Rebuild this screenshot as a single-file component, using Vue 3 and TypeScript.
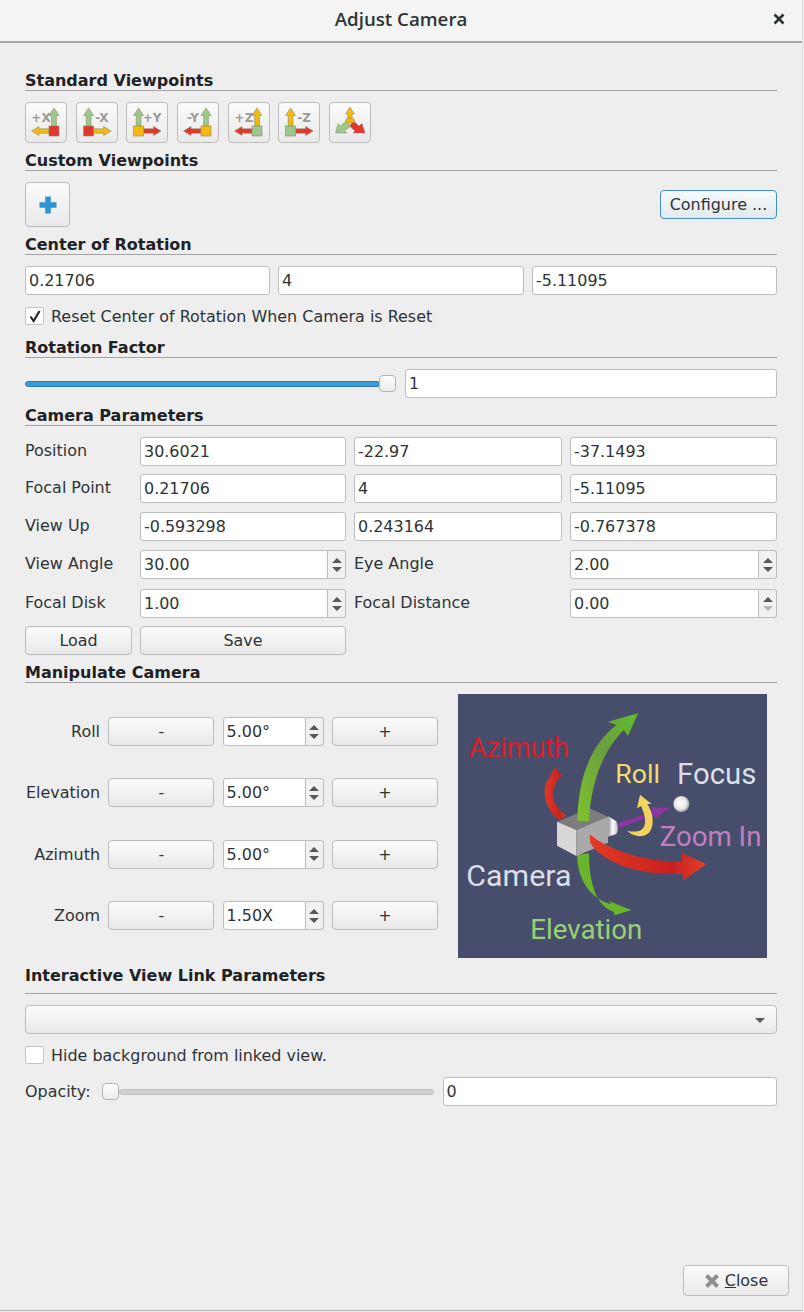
<script setup lang="ts">
const G = '#9cc88c', Y = '#f4b90f', R = '#e2382c'
const views = [
  { t: '+X', flip: false, v: G, h: Y, s: R },
  { t: '-X', flip: true, v: G, h: Y, s: R },
  { t: '+Y', flip: true, v: G, h: R, s: Y },
  { t: '-Y', flip: false, v: G, h: R, s: Y },
  { t: '+Z', flip: false, v: Y, h: R, s: G },
  { t: '-Z', flip: true, v: Y, h: R, s: G },
]
const params = [
  { label: 'Position', vals: ['30.6021', '-22.97', '-37.1493'] },
  { label: 'Focal Point', vals: ['0.21706', '4', '-5.11095'] },
  { label: 'View Up', vals: ['-0.593298', '0.243164', '-0.767378'] },
]
const manip = [
  { label: 'Roll', val: '5.00°' },
  { label: 'Elevation', val: '5.00°' },
  { label: 'Azimuth', val: '5.00°' },
  { label: 'Zoom', val: '1.50X' },
]
</script>

<template>
  <div class="window">
    <header class="title">
      <span class="title-text">Adjust Camera</span>
      <svg class="title-x" width="12" height="12" viewBox="0 0 12 12">
        <path d="M1.5 1.5 10.5 10.5M10.5 1.5 1.5 10.5" stroke="#2e3436" stroke-width="2.6" />
      </svg>
    </header>

    <main class="body">
      <div class="head first">Standard Viewpoints</div>
      <div class="views">
        <button v-for="v in views" :key="v.t" class="btn view">
          <svg width="42" height="41" viewBox="0 0 42 41">
            <g :transform="v.flip ? 'translate(41.6 0) scale(-1 1)' : ''" stroke="#8b8b6f" stroke-width=".6">
              <path d="M29 6 34 13.5H31.4V24H26.6V13.5H24Z" :fill="v.v" />
              <path d="M6.5 29 14 24.5V26.8H24V31.2H14V33.5Z" :fill="v.h" />
              <rect x="24" y="24" width="10" height="10" :fill="v.s" />
            </g>
            <text class="vt" :x="v.flip ? 26 : 16" y="19.5" text-anchor="middle">{{ v.t }}</text>
          </svg>
        </button>
        <button class="btn view">
          <svg width="42" height="41" viewBox="0 0 42 41">
            <g stroke="#8b8b6f" stroke-width=".5">
              <path d="M6.5 31 9 21.5 11.5 24 17 19 21.5 24 15.5 29 18 31Z" fill="#9cc88c" />
              <path d="M36 31 33 21.5 30 24 24.5 19 20.5 24 26 29 24 31Z" fill="#e2382c" />
              <path d="M21 5 25.5 12H23.3V17H18.7V12H16.5Z" fill="#f4b90f" />
              <ellipse cx="21" cy="18.5" rx="4.5" ry="2.6" fill="#f4b90f" />
            </g>
          </svg>
        </button>
      </div>

      <div class="head">Custom Viewpoints</div>
      <div class="custom">
        <button class="btn plus">
          <svg width="20" height="20" viewBox="0 0 20 20">
            <path d="M7.2 1.5H12.8V7.2H18.5V12.8H12.8V18.5H7.2V12.8H1.5V7.2H7.2Z" fill="#2f94cf" />
          </svg>
        </button>
        <button class="btn configure">Configure ...</button>
      </div>

      <div class="head">Center of Rotation</div>
      <div class="three">
        <input class="field" readonly value="0.21706" />
        <input class="field" readonly value="4" />
        <input class="field" readonly value="-5.11095" />
      </div>
      <label class="check">
        <span class="box">
          <svg width="14" height="14" viewBox="0 0 14 14">
            <path d="M2.5 7.5 5.6 12 11.5 2" fill="none" stroke="#26292b" stroke-width="2.2" />
          </svg>
        </span>
        Reset Center of Rotation When Camera is Reset
      </label>

      <div class="head mt12">Rotation Factor</div>
      <div class="rot">
        <div class="slider rot-slider">
          <div class="track blue"></div>
          <div class="handle"></div>
        </div>
        <input class="field" readonly value="1" />
      </div>

      <div class="head">Camera Parameters</div>
      <div class="params">
        <template v-for="p in params" :key="p.label">
          <span class="lab">{{ p.label }}</span>
          <input v-for="x in p.vals" :key="x" class="field" readonly :value="x" />
        </template>

        <span class="lab">View Angle</span>
        <div class="spin">
          <input class="field" readonly value="30.00" />
          <span class="arrows"><i class="up"></i><i class="down"></i></span>
        </div>
        <span class="lab">Eye Angle</span>
        <div class="spin">
          <input class="field" readonly value="2.00" />
          <span class="arrows"><i class="up"></i><i class="down"></i></span>
        </div>

        <span class="lab">Focal Disk</span>
        <div class="spin">
          <input class="field" readonly value="1.00" />
          <span class="arrows"><i class="up"></i><i class="down"></i></span>
        </div>
        <span class="lab">Focal Distance</span>
        <div class="spin">
          <input class="field" readonly value="0.00" />
          <span class="arrows"><i class="up"></i><i class="down off"></i></span>
        </div>

        <button class="btn">Load</button>
        <button class="btn">Save</button>
      </div>

      <div class="head">Manipulate Camera</div>
      <div class="manip">
        <div class="manip-rows">
          <template v-for="m in manip" :key="m.label">
            <span class="mlab">{{ m.label }}</span>
            <button class="btn">-</button>
            <div class="spin small">
              <input class="field" readonly :value="m.val" />
              <span class="arrows"><i class="up"></i><i class="down"></i></span>
            </div>
            <button class="btn">+</button>
          </template>
        </div>

        <svg class="diagram" width="309" height="264" viewBox="0 0 309 264">
          <defs>
            <linearGradient id="gr" x1="0" y1="1" x2="1" y2="0">
              <stop offset="0" stop-color="#7fc22e" />
              <stop offset=".55" stop-color="#6a9f3e" />
              <stop offset="1" stop-color="#62bb2c" />
            </linearGradient>
            <linearGradient id="rd" x1="0" y1="0" x2="1" y2="0">
              <stop offset="0" stop-color="#e23a24" />
              <stop offset=".7" stop-color="#c9201f" />
              <stop offset="1" stop-color="#e2402a" />
            </linearGradient>
            <linearGradient id="lens" x1="0" y1="0" x2="1" y2="0">
              <stop offset="0" stop-color="#9a9a9a" />
              <stop offset=".5" stop-color="#ffffff" />
              <stop offset="1" stop-color="#bdbdbd" />
            </linearGradient>
            <radialGradient id="ball" cx=".45" cy=".45" r=".6">
              <stop offset="0" stop-color="#ffffff" />
              <stop offset=".6" stop-color="#e9e9e9" />
              <stop offset="1" stop-color="#8d8f98" />
            </radialGradient>
          </defs>
          <rect width="309" height="264" fill="#474e6c" />
          <g transform="translate(-18.3 -14) scale(.3333)">
            <path d="M412 525C415 600 450 655 515 673L507 663 575 690 525 706 522 695C470 680 448 610 448 520Z" fill="#6ab52e" />
            <path d="M358 420C322 390 308 350 318 312L325 300 345 263 367 285 352 300 340 330C335 360 350 385 380 407Z" fill="url(#rd)" />
            <path d="M505 408 530 424C536 440 536 452 530 462L505 470Z" fill="url(#lens)" />
            <path d="M352 425 450 385 505 410 410 450Z" fill="#7d7d7d" />
            <path d="M352 425 410 450 410 528 352 497Z" fill="#d8d8d8" />
            <path d="M410 450 505 410 505 488 410 528Z" fill="#a9a9a9" />
            <path d="M413 422C415 310 445 200 530 135L505 125 595 100 565 168 552 150C485 220 455 310 447 424Z" fill="url(#gr)" />
            <path d="M532 430 638 396 634 382 692 383 648 414 643 408 537 443Z" fill="#8a36a0" />
            <path d="M562 452C590 458 612 456 616 430 618 410 610 392 604 378L592 385 601 344 636 372 623 372C642 400 645 440 628 458 610 475 580 470 562 452Z" fill="#f3d35c" />
            <path d="M450 463C500 505 600 545 725 545L727 520 800 552 730 602 728 580C610 590 490 550 452 490Z" fill="url(#rd)" />
            <circle cx="725" cy="372" r="24" fill="url(#ball)" />
            <text class="dt" x="88" y="230" fill="#d8202a" font-size="81">Azimuth</text>
            <text class="dt" x="527" y="310" fill="#f3dc6a" font-size="80">Roll</text>
            <text class="dt" x="712" y="313" fill="#dcdfe6" font-size="88">Focus</text>
            <text class="dt" x="660" y="497" fill="#c07fc0" font-size="83">Zoom In</text>
            <text class="dt" x="80" y="617" fill="#dcdfe6" font-size="91">Camera</text>
            <text class="dt" x="272" y="778" fill="#9ccf76" font-size="83">Elevation</text>
          </g>
        </svg>
      </div>

      <div class="head tall">Interactive View Link Parameters</div>
      <div class="combo btn">
        <i class="caret"></i>
      </div>
      <label class="check">
        <span class="box"></span>
        Hide background from linked view.
      </label>
      <div class="opacity">
        <span>Opacity:</span>
        <div class="slider op-slider">
          <div class="handle"></div>
          <div class="track grey"></div>
        </div>
        <input class="field" readonly value="0" />
      </div>
    </main>

    <footer class="foot">
      <button class="btn close">
        <svg width="16" height="16" viewBox="0 0 16 16">
          <path d="M2.5 2.5 13.5 13.5M13.5 2.5 2.5 13.5" stroke="#8f8f8f" stroke-width="4" />
        </svg>
        <span><u>C</u>lose</span>
      </button>
    </footer>
  </div>
</template>

<style>
html, body { margin: 0; background: #eeeeee; }
</style>

<style scoped>
.window {
  width: 802px;
  height: 1310px;
  background: #eeeeee;
  border-right: 1px solid #e0e0e0;
  border-bottom: 1px solid #b5b5b5;
  display: flex;
  flex-direction: column;
  font: 15.95px "DejaVu Sans", sans-serif;
  color: #2e3436;
  overflow: hidden;
}
.title {
  height: 43px;
  flex: none;
  box-sizing: border-box;
  padding-bottom: 4px;
  border-bottom: 2px solid #a8a8a4;
  background: #f4f4f4;
  position: relative;
  display: flex;
  align-items: center;
  justify-content: center;
}
.title-text {
  font: 600 18.7px "Open Sans", sans-serif;
  color: #2e3436;
}
.title-x { position: absolute; left: 773px; top: 13px; }

.body {
  flex: 1;
  padding: 0 25px 0 25px;
  display: flex;
  flex-direction: column;
  min-height: 0;
}
.head {
  height: 20px;
  margin-top: 7px;
  margin-bottom: 11px;
  flex: none;
  border-bottom: 1px solid #a3a3a3;
  font-weight: 700;
  font-size: 16px;
  line-height: 21px;
  color: #1f2224;
}
.head.first { margin-top: 27px; }
.head.mt12 { margin-top: 12px; }
.head.tall { height: 28px; margin-top: 7px; }

.btn {
  box-sizing: border-box;
  border: 1px solid #bcbcbc;
  border-radius: 4px;
  background: linear-gradient(#fbfbfb, #e9e9e9);
  font: inherit;
  color: inherit;
  padding: 0;
  height: 29px;
}
.views { display: flex; gap: 8.7px; height: 41px; }
.view { width: 42px; height: 41px; display: block; }
.view svg { display: block; margin: -1px; }
.vt { font: 700 12px "DejaVu Sans", sans-serif; fill: #9a9a9a; }

.custom { display: flex; justify-content: space-between; align-items: center; height: 45px; }
.plus { width: 45px; height: 45px; display: flex; align-items: center; justify-content: center; }
.configure {
  width: 117px;
  border-color: #3f8fc4;
  background: linear-gradient(#f6fafc, #e2e9ee);
}

.field {
  box-sizing: border-box;
  width: 100%;
  min-width: 0;
  height: 29px;
  border: 1px solid #bdbdbd;
  border-radius: 3px;
  background: #fff;
  font: inherit;
  color: inherit;
  padding: 0 3px;
  outline: none;
}
.three { display: grid; grid-template-columns: 245px 246px 245px; gap: 8px; width: 752px; }
.check { display: flex; align-items: center; gap: 7px; height: 18px; margin-top: 12px; }
.box {
  box-sizing: border-box;
  width: 19px;
  height: 18px;
  border: 1px solid #c4c4c4;
  border-radius: 2px;
  background: #fff;
  display: flex;
  align-items: center;
  justify-content: center;
}

.rot { display: flex; align-items: center; gap: 9px; width: 752px; }
.slider { display: flex; align-items: center; position: relative; height: 29px; }
.rot-slider { width: 371px; flex: none; }
.track { height: 6px; border-radius: 3px; flex: 1; box-sizing: border-box; }
.track.blue { background: #3c9ad9; border: 1px solid #2b7cb3; }
.track.grey { background: #cfcfcf; border: 1px solid #c2c2c2; }
.handle {
  box-sizing: border-box;
  width: 17px;
  height: 17px;
  flex: none;
  border: 1px solid #b4b4b4;
  border-radius: 4px;
  background: linear-gradient(#fdfdfd, #ececec);
}
.rot-slider .handle { margin-left: -1px; }

.params {
  display: grid;
  grid-template-columns: 107px 206px 208px 207px;
  grid-template-rows: 37px 38px 38px 39px 37px 29px;
  column-gap: 8px;
  width: 752px;
  align-items: start;
}
.lab { white-space: nowrap; line-height: 28px; }
.spin { display: flex; height: 29px; position: relative; }
.spin .field { padding-right: 22px; }
.arrows {
  position: absolute;
  right: 0;
  top: 0;
  bottom: 0;
  width: 19px;
  box-sizing: border-box;
  border: 1px solid #bdbdbd;
  border-radius: 0 3px 3px 0;
  background: #f1f1f1;
  display: flex;
  flex-direction: column;
  align-items: center;
  justify-content: center;
  gap: 4px;
}
.up, .down { width: 0; height: 0; border-left: 5px solid transparent; border-right: 5px solid transparent; }
.up { border-bottom: 5px solid #555a5c; }
.down { border-top: 5px solid #555a5c; }
.down.off { border-top-color: #b5b5b5; }

.manip { display: flex; height: 264px; gap: 20px; }
.manip-rows {
  width: 413px;
  flex: none;
  padding-top: 23px;
  display: grid;
  grid-template-columns: 75px 106px 101px 106px;
  column-gap: 8.3px;
  grid-auto-rows: 29px;
  row-gap: 32.4px;
  align-items: center;
}
.mlab { text-align: right; }
.diagram { display: block; flex: none; }
.dt { font-family: Roboto, sans-serif; }

.combo { width: 752px; position: relative; flex: none; margin-bottom: 0; }
.caret {
  position: absolute;
  right: 11px;
  top: 12px;
  width: 0;
  height: 0;
  border-left: 5px solid transparent;
  border-right: 5px solid transparent;
  border-top: 5px solid #555a5c;
}
.opacity { display: flex; align-items: center; width: 752px; margin-top: 13px; }
.op-slider { width: 332px; margin-left: 11px; flex: none; }
.opacity .field { flex: 1; margin-left: 9px; }

.foot { display: flex; justify-content: flex-end; padding: 0 13px 14px 0; flex: none; }
.close {
  width: 106px;
  height: 31px;
  display: flex;
  align-items: center;
  justify-content: center;
  gap: 5px;
}
</style>
